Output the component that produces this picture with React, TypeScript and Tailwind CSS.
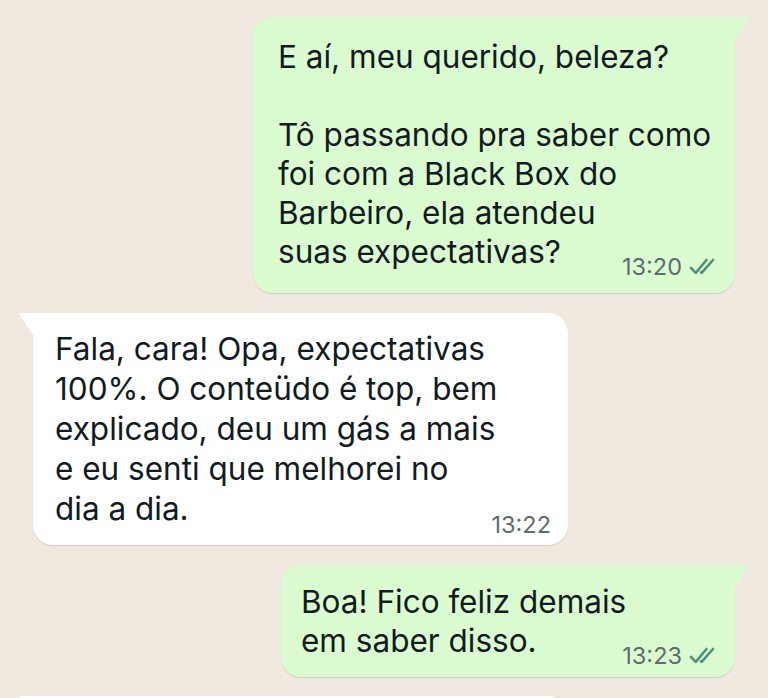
import React from 'react';

const font = { fontFamily: 'Inter, "Liberation Sans", sans-serif' };

function Checks() {
  return (
    <svg width="31" height="19" viewBox="0 0 31 19" fill="none" className="ml-[7px] mb-[4px]">
      <path d="M2 11 L6.8 15.8 L17.5 3" stroke="#51917a" strokeWidth="2.6" strokeLinecap="round" strokeLinejoin="round" />
      <path d="M12 15.2 L12.6 15.8 L24 3" stroke="#51917a" strokeWidth="2.6" strokeLinecap="round" strokeLinejoin="round" />
    </svg>
  );
}

function Time({ time, read }: { time: string; read?: boolean }) {
  return (
    <span className="flex items-end -mb-[9px] text-[23.5px] leading-[26px] text-[#5f6c70]">
      {time}
      {read && <Checks />}
    </span>
  );
}

function Bubble({
  mine,
  lines,
  time,
  className
}: {
  mine?: boolean;
  lines: string[];
  time?: string;
  className: string;
}) {
  const body = lines.slice(0, -1);
  const last = lines[lines.length - 1];
  return (
    <div
      className={`relative shrink-0 rounded-[20px] shadow-[0_1px_1px_rgba(0,0,0,0.12)] text-[31.5px] text-[#111b21] ${mine ? 'self-end bg-[#dbfcd0] rounded-tr-none leading-[39px]' : 'self-start bg-white rounded-tl-none leading-[40px]'} ${className}`}
    >
      {mine ? (
        <svg width="14" height="22" viewBox="0 0 14 22" className="absolute left-full top-0">
          <path d="M0 0 H11 Q14.5 0 12.5 3.2 L0 22 Z" fill="#dbfcd0" />
        </svg>
      ) : (
        <svg width="14" height="22" viewBox="0 0 14 22" className="absolute right-full top-0">
          <path d="M14 0 H3 Q-0.5 0 1.5 3.2 L14 22 Z" fill="#ffffff" />
        </svg>
      )}
      {body.map((l, i) => (
        <div key={i} className={`whitespace-nowrap ${mine ? 'h-[39px]' : 'h-[40px]'}`}>
          {l}
        </div>
      ))}
      <div className="flex items-end justify-between whitespace-nowrap">
        <span>{last}</span>
        {time && <Time time={time} read={mine} />}
      </div>
    </div>
  );
}

export default function App() {
  return (
    <div style={font} className="h-[698px] overflow-hidden bg-[#f0e9e0] flex flex-col gap-[20px] pt-[17px] pl-[33px] pr-[33px]">
      <Bubble
        mine
        className="w-[482px] h-[276px] pl-[25px] pr-[15px] pt-[20px]"
        lines={[
          'E aí, meu querido, beleza?',
          '',
          'Tô passando pra saber como',
          'foi com a Black Box do',
          'Barbeiro, ela atendeu',
          'suas expectativas?'
        ]}
        time="13:20"
      />
      <Bubble
        className="w-[535px] h-[232px] pl-[22px] pr-[17px] pt-[16px]"
        lines={[
          'Fala, cara! Opa, expectativas',
          '100%. O conteüdo é top, bem',
          'explicado, deu um gás a mais',
          'e eu senti que melhorei no',
          'dia a dia.'
        ]}
        time="13:22"
      />
      <Bubble
        mine
        className="w-[454px] h-[112px] pl-[20px] pr-[15px] pt-[17px]"
        lines={['Boa! Fico feliz demais', 'em saber disso.']}
        time="13:23"
      />
      <div className="shrink-0 mt-[-1px] flex">
        <Bubble className="w-[535px] h-[120px] pl-[22px] pt-[18px]" lines={['']} />
      </div>
    </div>
  );
}
